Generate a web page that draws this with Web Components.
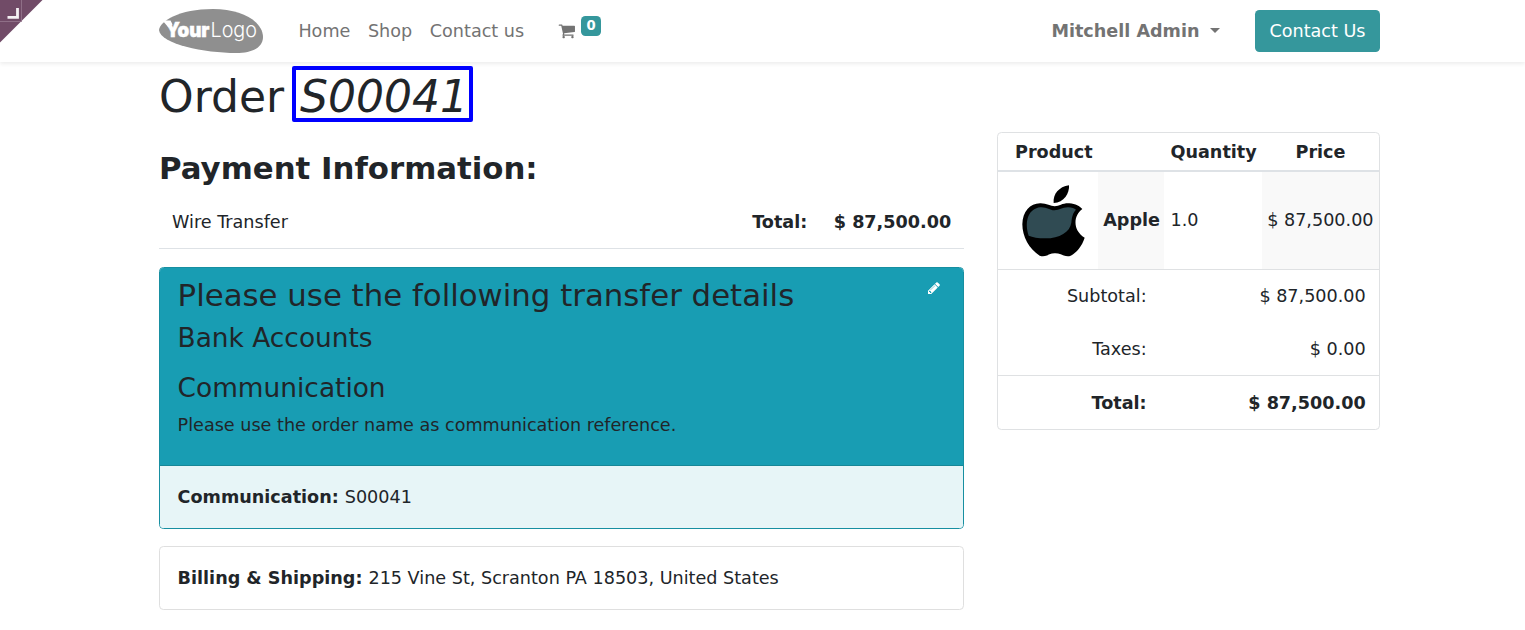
<!DOCTYPE html>
<html lang="en">
<head>
<meta charset="utf-8">
<title>Order S00041</title>
<style>
body{margin:0;background:#fff;color:#212529;font:17.6px/26.4px "DejaVu Sans",sans-serif;overflow:hidden;height:630px}
</style>
</head>
<body>
<order-page></order-page>
<script>
const define=(name,html)=>{
  const t=document.createElement('template');
  t.innerHTML='<style>*,*::after{box-sizing:border-box}</style>'+html;
  customElements.define(name,class extends HTMLElement{
    constructor(){super();this.attachShadow({mode:'open'}).append(t.content.cloneNode(true));}
  });
};

define('editor-corner',`<style>:host{position:absolute;left:0;top:0;width:43px;height:43px;z-index:2}svg{display:block}</style>
<svg width="43" height="43"><path d="M0 0H42.5L0 42.5Z" fill="#714b67"/><path d="M0 21.5H21.5V0" fill="none" stroke="#8f6f87"/><path d="M7.500 17.3H17.500V8" fill="none" stroke="#f4f0f2" stroke-width="2.8"/></svg>`);

define('brand-logo',`<style>:host{display:block;width:106px;height:46px}svg{display:block}</style>
<svg width="106" height="46" viewBox="0 0 106 46"><path d="M0 22C1 13 20 1 54 1C84 1 104 14 104 29C104 39 94 45 77 45C46 45 1 36 0 22Z" fill="#8f8f8f"/>
<g fill="#fff"><path d="M3.500 12.500h8l2 4-4 3z"/><text x="6.500" y="29" font-family="Inter,sans-serif" font-weight="900" font-size="20" textLength="44" lengthAdjust="spacingAndGlyphs" stroke="#fff" stroke-width=".4">Your</text>
<text x="51.500" y="29" font-family="Inter,sans-serif" font-weight="300" font-size="20.500" textLength="46.500" lengthAdjust="spacingAndGlyphs">Logo</text></g></svg>`);

define('cart-link',`<style>:host{display:flex;align-items:flex-start;height:46px}
svg{margin-top:13.5px}span{margin:8px 0 0 5px;width:20px;height:20px;border-radius:4.4px;background:#35979c;color:#fff;font:bold 13.2px/20px "DejaVu Sans",sans-serif;text-align:center}</style>
<svg width="17.6" height="17.6" viewBox="0 0 1792 1792" fill="#737373"><path d="M704 1536q0 52-38 90t-90 38-90-38-38-90 38-90 90-38 90 38 38 90zm896 0q0 52-38 90t-90 38-90-38-38-90 38-90 90-38 90 38 38 90zm128-1088v512q0 24-16.5 42.5t-40.5 21.5l-1044 122q13 60 13 70 0 16-24 64h920q26 0 45 19t19 45-19 45-45 19h-1024q-26 0-45-19t-19-45q0-11 8-31.5t16-36 21.5-40 15.5-29.5l-177-823h-204q-26 0-45-19t-19-45 19-45 45-19h256q16 0 28.5 6.5t19.5 15.5 13 24.5 8 26 5.5 29.5 4.5 26h1201q26 0 45 19t19 45z"/></svg><span><slot></slot></span>`);

define('site-header',`<style>:host{display:flex;height:62px;padding:0 145px 0 159px;align-items:center;background:#fff;color:#737373;box-shadow:0 2px 4px rgba(0,0,0,.075);position:relative;white-space:nowrap}
nav{display:flex;gap:17.6px;margin-left:33.4px}cart-link{margin-left:34.3px}
.user{margin-left:auto;font-weight:bold;display:flex;align-items:center}.user i{border:5.3px solid transparent;border-top-color:#737373;border-bottom:0;margin-left:10.5px;margin-top:-2px}
.cta{margin-left:35px;width:125px;height:42px;border-radius:4.4px;background:#35979c;color:#fff;text-align:center;line-height:42px}</style>
<brand-logo></brand-logo><nav><span>Home</span><span>Shop</span><span>Contact us</span></nav><cart-link>0</cart-link>
<div class="user">Mitchell Admin<i></i></div><div class="cta">Contact Us</div>`);

define('order-title',`<style>:host{display:block;height:53px;margin-top:8px}
h1{margin:0;font:44px/53px "DejaVu Sans",sans-serif;white-space:pre}em{position:relative;margin-left:2px}
em::after{content:"";position:absolute;left:-8px;right:-5px;top:-5.5px;height:56px;border:4px solid #00f;border-radius:2px}</style>
<h1>Order <em><slot></slot></em></h1>`);

define('payment-line',`<style>:host{display:flex;height:53px;padding:0 12.8px 0 13px;align-items:center;border-bottom:1px solid #dee2e6}
b{margin-left:auto}b+b{margin-left:26.5px}</style><slot></slot><b>Total:</b><b>$ 87,500.00</b>`);

define('transfer-card',`<style>:host{display:block;margin-top:18px;height:262px;border:1px solid #178fa1;border-radius:4.4px;overflow:hidden}
.top{height:198px;background:#189db3;border-bottom:1px solid #178797;padding:9px 17.6px 0;display:flex;justify-content:space-between}
h3,h4,p{margin:0;font-weight:400}h3{font-size:30.8px;line-height:37px}h4{font-size:26.4px;line-height:32px;margin-top:8px}h4+h4{margin-top:18px}p{margin-top:8px}
svg{margin:4px 4.4px 0 0}.foot{height:62px;background:#e7f5f7;padding:0 17.6px;line-height:62px}.foot b{margin-right:.4px}</style>
<div class="top"><div><h3>Please use the following transfer details</h3><h4>Bank Accounts</h4><h4>Communication</h4><p>Please use the order name as communication reference.</p></div>
<svg width="14" height="14" viewBox="0 0 1792 1792" fill="#fff"><path d="M491 1536l91-91-235-235-91 91v107h128v128h107zm523-928q0-22-22-22-10 0-17 7l-542 542q-7 7-7 17 0 22 22 22 10 0 17-7l542-542q7-7 7-17zm-54-192l416 416-832 832h-416v-416zm683 96q0 53-37 90l-166 166-416-416 166-165q36-38 90-38 53 0 91 38l235 234q37 39 37 91z"/></svg></div>
<div class="foot"><b>Communication:</b> <slot></slot></div>`);

define('address-card',`<style>:host{display:block;margin-top:17px;height:64px;border:1px solid #dfdfdf;border-radius:4.4px;padding:0 17.6px;line-height:62px}b{margin-right:.4px}</style><b>Billing &amp; Shipping:</b> <slot></slot>`);

define('apple-picture',`<style>:host{display:block}svg{display:block}</style>
<svg width="64" height="72" viewBox="96 179 192 216"><path d="M237 180C239 204 222 232 191 233C188 207 207 184 237 180Z"/><path d="M194 243C209 242 217 233 238 234C257 235 269 243 277 251C250 271 247 314 284 337C276 362 260 382 242 391C227 398 213 383 194 384C177 384 168 397 149 391C117 371 97 333 97 297C98 258 121 233 152 234C170 234 182 243 194 243Z"/><path d="M193 255C209 255 215 246 234 246C246 246 253 249 258 253C248 263 246 275 244 292C240 320 209 339 166 339C144 339 128 336 116 331C101 285 118 249 151 246C171 245 179 255 193 255Z" fill="#304b53"/></svg>`);

define('order-summary',`<style>:host{display:block;width:383px;height:298px;border:1px solid #dfe1e3;border-radius:4.4px;overflow:hidden;white-space:nowrap}
.r{display:grid;grid-template-columns:100px 66px 98px 1fr;align-items:center}
.h{height:39px;padding-top:2px;font-weight:bold;border-bottom:2px solid #dee2e6}.h>*{padding-left:6.5px}.h>:first-child{padding-left:17px}.h>:last-child{padding:0;text-align:center}
.p{height:97px;align-items:stretch}.p>*{display:flex;align-items:center;padding-left:6.5px}.p>.g{padding-left:5.2px}.p>:first-child{padding:0 0 0 24px}.g{background:#f9f9f9}
.t{display:grid;grid-template-columns:148.6px 1fr;height:53px;align-items:center;text-align:right;padding-right:13.3px}.x{padding-top:1px}.s{border-top:1px solid #dfe1e3}.b{font-weight:bold;height:54px;padding-top:1px}</style>
<div class="r h"><span>Product</span><span></span><span>Quantity</span><span>Price</span></div>
<div class="r p"><span><apple-picture></apple-picture></span><b class="g">Apple</b><span>1.0</span><span class="g">$ 87,500.00</span></div>
<div class="t s"><span>Subtotal:</span><span>$ 87,500.00</span></div>
<div class="t x"><span>Taxes:</span><span>$ 0.00</span></div>
<div class="t s b"><span>Total:</span><span>$ 87,500.00</span></div>`);

define('order-page',`<style>:host{display:block;position:relative}main{padding:0 145px 0 159px}
.cols{display:flex;justify-content:space-between;align-items:flex-start}.left{width:805px}h2{margin:27px 0 9px;font-size:30.8px;line-height:37px}order-summary{margin-top:9px}</style>
<site-header></site-header><editor-corner></editor-corner>
<main><order-title>S00041</order-title><div class="cols"><div class="left"><h2>Payment Information:</h2><payment-line>Wire Transfer</payment-line><transfer-card>S00041</transfer-card><address-card>215 Vine St, Scranton PA 18503, United States</address-card></div><order-summary></order-summary></div></main>`);
</script>
</body>
</html>
